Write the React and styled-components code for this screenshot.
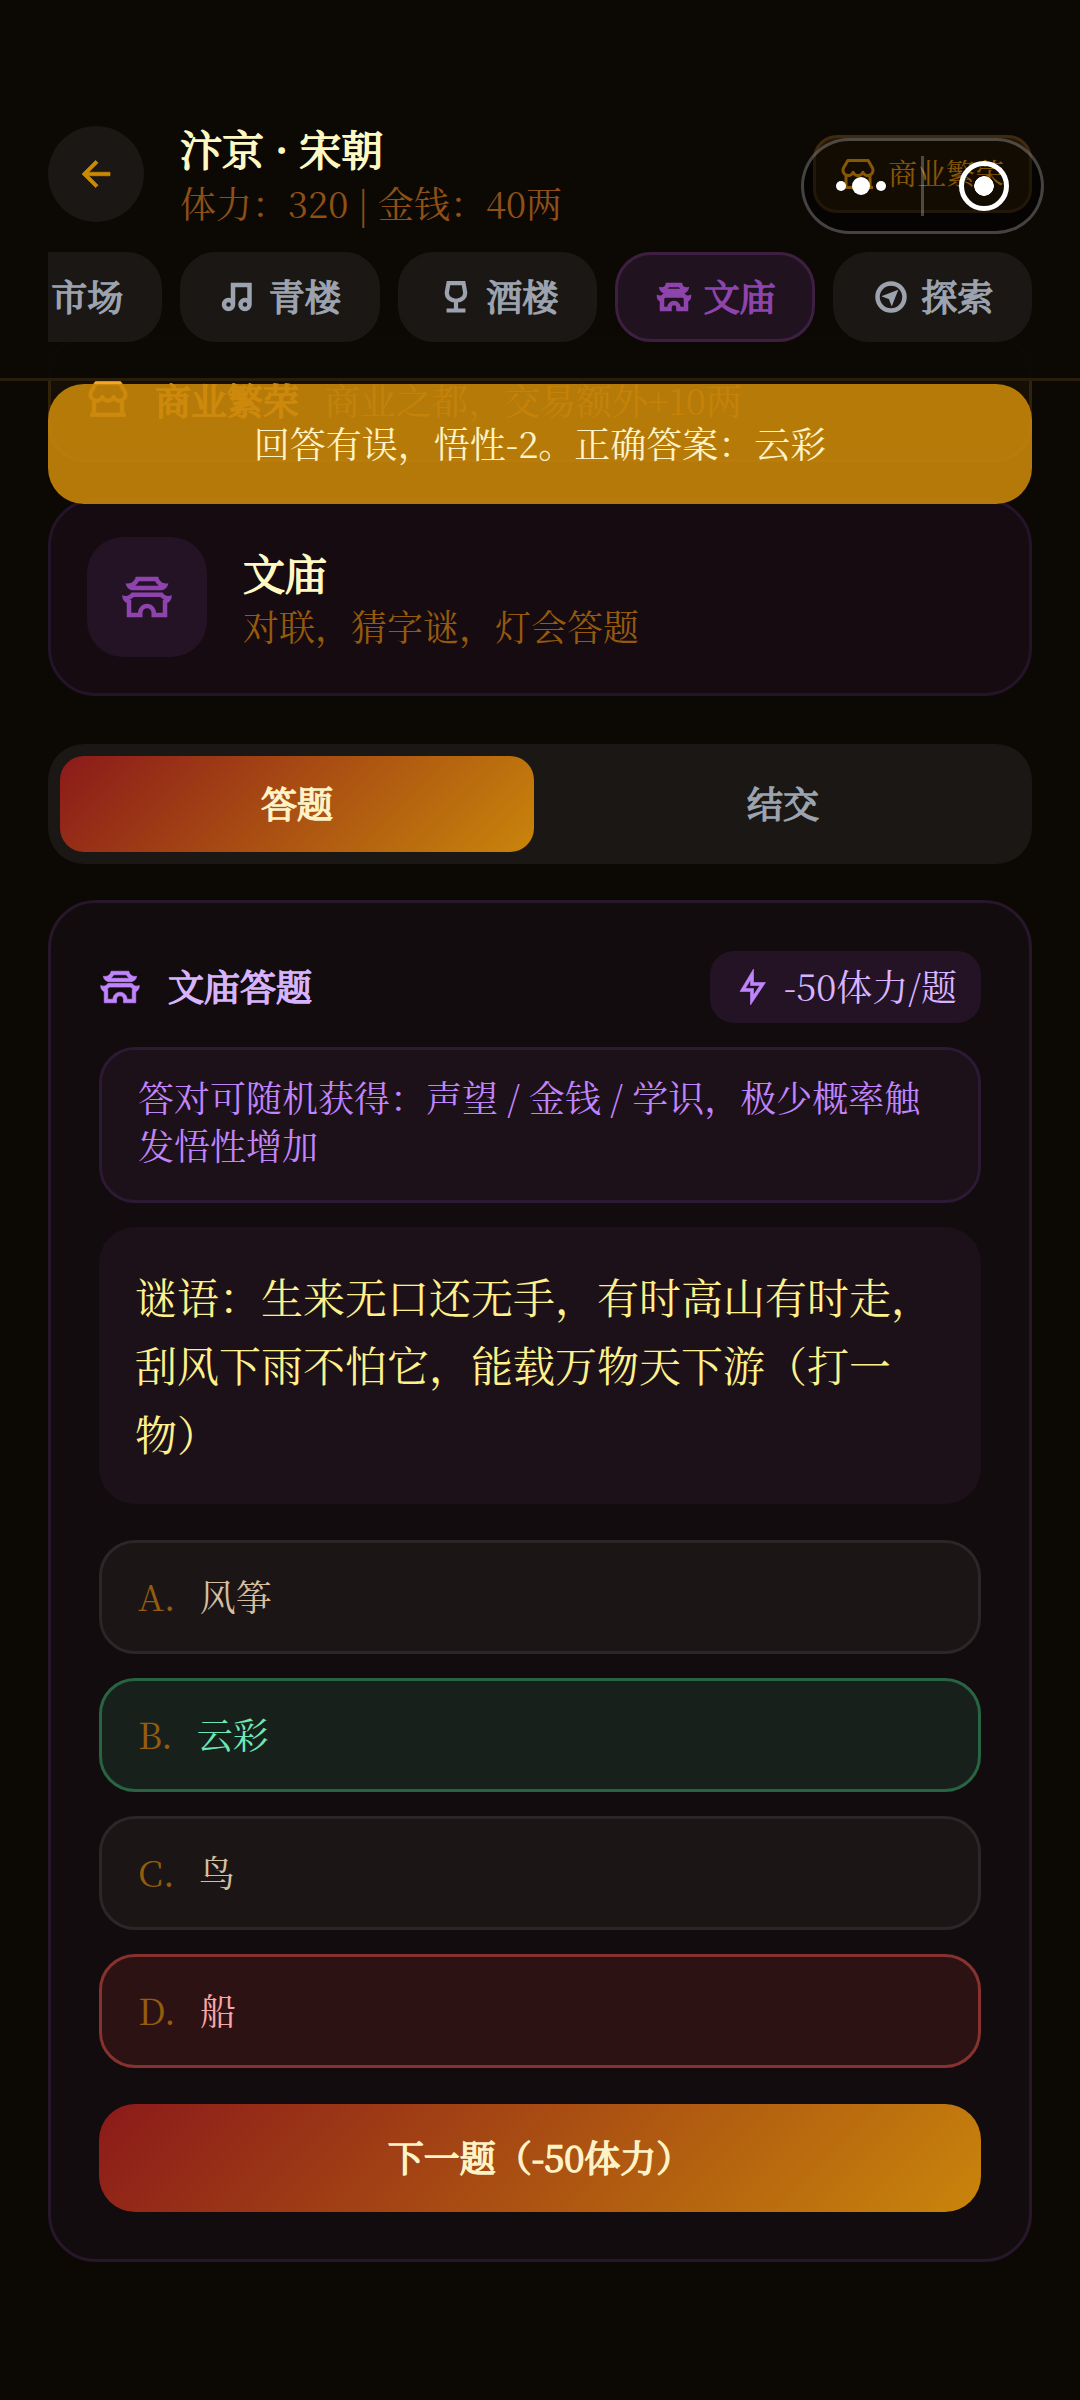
import React from 'react';
import styled, { createGlobalStyle, css } from 'styled-components';
import {
  RiArrowLeftLine,
  RiMusic2Line,
  RiAncientGateLine,
  RiCompassDiscoverLine,
  RiStore2Line,
  RiFlashlightLine,
} from 'react-icons/ri';

const GobletIcon = () => (
  <svg width="1em" height="1em" viewBox="0 0 24 24">
    <path
      d="M7 2.7h10l1.1 6.2c.2 3.3-2.5 5.6-6.1 5.6s-6.3-2.3-6.1-5.6zM12 14.5V21M5.7 21h12.6"
      fill="none"
      stroke="currentColor"
      strokeWidth="2.8"
    />
  </svg>
);

const tabs = [
  { id: 'market', label: '市场', icon: RiStore2Line },
  { id: 'music', label: '青楼', icon: RiMusic2Line },
  { id: 'tavern', label: '酒楼', icon: GobletIcon },
  { id: 'temple', label: '文庙', icon: RiAncientGateLine },
  { id: 'explore', label: '探索', icon: RiCompassDiscoverLine },
];

const options = [
  { key: 'A', text: '风筝', state: 'idle' },
  { key: 'B', text: '云彩', state: 'right' },
  { key: 'C', text: '鸟', state: 'idle' },
  { key: 'D', text: '船', state: 'wrong' },
];

const App = () => {
  const activeTab = 'temple';

  return (
    <Page>
      <GlobalStyle />

      <Header>
        <TopRow>
          <BackButton><RiArrowLeftLine /></BackButton>
          <div>
            <CityName>汴京 · 宋朝</CityName>
            <Stats>体力：320 | 金钱：40两</Stats>
          </div>
          <CityTag><RiStore2Line /><Label>商业繁荣</Label></CityTag>
        </TopRow>
        <TabScroller>
          {tabs.map(({ id, label, icon: Icon }) => (
            <Tab key={id} $active={id === activeTab}>
              <Icon />
              <Label>{label}</Label>
            </Tab>
          ))}
        </TabScroller>
      </Header>

      <Capsule>
        <Dots><i /><b /><i /></Dots>
        <Divider />
        <Target />
      </Capsule>

      <Toast>回答有误，悟性-2。正确答案：云彩</Toast>

      <Content>
        <Banner>
          <RiStore2Line />
          <strong>商业繁荣</strong>
          <span>商业之都，交易额外+10两</span>
        </Banner>

        <PlaceCard>
          <PlaceIcon><RiAncientGateLine /></PlaceIcon>
          <div>
            <PlaceName>文庙</PlaceName>
            <PlaceDesc>对联，猜字谜，灯会答题</PlaceDesc>
          </div>
        </PlaceCard>

        <Switcher>
          <SwitchItem $active>答题</SwitchItem>
          <SwitchItem>结交</SwitchItem>
        </Switcher>

        <QuizCard>
          <QuizHead>
            <QuizTitle><RiAncientGateLine /><Label>文庙答题</Label></QuizTitle>
            <Cost><RiFlashlightLine /><Label>-50体力/题</Label></Cost>
          </QuizHead>
          <Hint>答对可随机获得：声望 / 金钱 / 学识，极少概率触发悟性增加</Hint>
          <Question>谜语：生来无口还无手，有时高山有时走，刮风下雨不怕它，能载万物天下游（打一物）</Question>
          <Options>
            {options.map(option => (
              <Option key={option.key} $state={option.state}>
                <OptionKey>{option.key}.</OptionKey>
                {option.text}
              </Option>
            ))}
          </Options>
          <NextButton>下一题（-50体力）</NextButton>
        </QuizCard>
      </Content>
    </Page>
  );
};

// Styles
const GlobalStyle = createGlobalStyle`
  * {
    box-sizing: border-box;
  }

  body {
    margin: 0;
    background: #0c0905;
    font-family: 'Noto Serif CJK SC', 'Noto Serif SC', 'Source Han Serif SC', 'Liberation Serif', 'Noto Sans CJK SC', serif;
  }

  svg {
    flex-shrink: 0;
  }
`;

// regular glyphs thickened by an outline, lighter than the real bold cut
const heavy = css`
  font-weight: 400;
  -webkit-text-stroke: 1.5px currentColor;
`;

const Page = styled.div`
  position: relative;
  height: 2400px;
  overflow: hidden;
  background: #0c0905;
  color: #fef3c7;
`;

const Label = styled.span`
  padding-bottom: 3px;
`;

const Header = styled.header`
  position: absolute;
  top: 0;
  left: 0;
  right: 0;
  z-index: 2;
  height: 381px;
  padding: 126px 48px 0;
  background: rgba(12, 9, 5, 0.98);
  border-bottom: 3px solid #291d0c;
`;

const TopRow = styled.div`
  display: flex;
  height: 96px;
  gap: 36px;
`;

const BackButton = styled.div`
  display: flex;
  align-items: center;
  justify-content: center;
  width: 96px;
  height: 96px;
  border-radius: 50%;
  background: #1a1714;
  color: #ca8a04;
  font-size: 42px;

  svg {
    stroke: currentColor;
    stroke-width: 0.4;
  }
`;

const CityName = styled.div`
  ${heavy}
  font-size: 42px;
  line-height: 44px;
  color: #fef9c3;
  white-space: pre;
`;

const Stats = styled.div`
  margin-top: 6px;
  font-size: 36px;
  line-height: 54px;
  color: #8f5016;
  white-space: pre;
`;

const CityTag = styled.div`
  display: flex;
  align-items: center;
  gap: 12px;
  height: 78px;
  margin: 9px 0 0 auto;
  padding: 0 25px 0 24px;
  border: 3px solid #402a10;
  border-radius: 24px;
  background: #241706;
  color: #f59e0b;
  font-size: 29px;

  svg {
    font-size: 36px;
  }
`;

const TabScroller = styled.div`
  display: flex;
  justify-content: flex-end;
  gap: 18px;
  margin-top: 30px;
  overflow: hidden;
`;

const Tab = styled.div`
  ${heavy}
  display: flex;
  flex-shrink: 0;
  align-items: center;
  justify-content: center;
  gap: 12px;
  width: 199.5px;
  height: 90px;
  padding-left: 2px;
  border-radius: 36px;
  border: 3px solid ${props => props.$active ? '#3d1f42' : '#1a1714'};
  background: ${props => props.$active ? '#21121f' : '#1a1714'};
  color: ${props => props.$active ? '#8e44ad' : '#9ca3af'};
  font-size: 36px;

  svg {
    stroke: currentColor;
    stroke-width: 1;
  }
`;

const Capsule = styled.div`
  position: absolute;
  top: 138px;
  left: 801px;
  z-index: 3;
  display: flex;
  align-items: center;
  width: 243px;
  height: 96px;
  padding: 0 32px;
  border: 3px solid rgba(255, 255, 255, 0.25);
  border-radius: 48px;
  background: rgba(0, 0, 0, 0.45);
`;

const Dots = styled.div`
  display: flex;
  align-items: center;
  gap: 6px;

  i, b {
    width: 10px;
    height: 10px;
    border-radius: 50%;
    background: #fff;
  }

  b {
    width: 18px;
    height: 18px;
  }
`;

const Divider = styled.div`
  width: 3px;
  height: 60px;
  margin-left: 35px;
  background: rgba(255, 255, 255, 0.25);
`;

const Target = styled.div`
  width: 50px;
  height: 50px;
  margin-left: 35px;
  border: 5px solid #fff;
  border-radius: 50%;
  background: radial-gradient(circle, #fff 9.5px, transparent 10px);
`;

const Toast = styled.div`
  position: absolute;
  top: 384px;
  left: 48px;
  right: 48px;
  z-index: 3;
  display: flex;
  align-items: center;
  justify-content: center;
  height: 120px;
  padding-bottom: 3px;
  border-radius: 36px;
  background: rgba(200, 134, 10, 0.9);
  font-size: 36px;
`;

const Content = styled.main`
  padding: 336px 48px 0;
`;

const Banner = styled.div`
  display: flex;
  align-items: center;
  height: 126px;
  padding: 0 36px;
  border: 3px solid #33220a;
  border-radius: 36px;
  background: #160f05;
  color: #f5a623;
  font-size: 36px;

  svg {
    font-size: 42px;
    margin-right: 26px;
    stroke: currentColor;
    stroke-width: 0.4;
  }

  strong {
    ${heavy}
    margin-right: 25px;
  }

  span {
    color: #a16207;
  }
`;

const PlaceCard = styled.div`
  display: flex;
  align-items: center;
  gap: 36px;
  height: 198px;
  margin-top: 36px;
  padding: 0 36px;
  border: 3px solid #24142a;
  border-radius: 48px;
  background: #150b10;
`;

const PlaceIcon = styled.div`
  display: flex;
  align-items: center;
  justify-content: center;
  width: 120px;
  height: 120px;
  border-radius: 36px;
  background: #241325;
  color: #8e44ad;
  font-size: 54px;
`;

const PlaceName = styled.div`
  ${heavy}
  margin-top: 4px;
  font-size: 42px;
  line-height: 52px;
  color: #fef9c3;
`;

const PlaceDesc = styled.div`
  margin-top: 1px;
  font-size: 36px;
  line-height: 54px;
  color: #955a0c;
`;

const Switcher = styled.div`
  display: flex;
  height: 120px;
  margin-top: 48px;
  padding: 12px;
  border-radius: 36px;
  background: #1a1714;
`;

const SwitchItem = styled.div`
  ${heavy}
  display: flex;
  flex: 1;
  align-items: center;
  justify-content: center;
  margin-right: ${props => props.$active ? '12px' : '0'};
  padding-bottom: 3px;
  border-radius: 24px;
  background: ${props => props.$active ? 'linear-gradient(135deg, #8b1a1a, #c9850b)' : 'none'};
  color: ${props => props.$active ? '#fef3c7' : '#9ca3af'};
  font-size: 36px;
`;

const QuizCard = styled.section`
  height: 1362px;
  margin-top: 36px;
  padding: 48px;
  border: 3px solid #28162b;
  border-radius: 48px;
  background: #130c0e;
`;

const QuizHead = styled.div`
  display: flex;
  align-items: center;
  justify-content: space-between;
`;

const QuizTitle = styled.div`
  ${heavy}
  display: flex;
  align-items: center;
  gap: 27px;
  color: #d8b4fe;
  font-size: 36px;

  svg {
    color: #c084fc;
    font-size: 42px;
    stroke: currentColor;
    stroke-width: 0.4;
  }
`;

const Cost = styled.div`
  display: flex;
  align-items: center;
  gap: 14px;
  height: 72px;
  padding: 0 24px;
  border-radius: 24px;
  background: #241325;
  color: #d8b4fe;
  font-size: 36px;

  svg {
    color: #c084fc;
    stroke: currentColor;
    stroke-width: 0.4;
  }
`;

const Hint = styled.div`
  height: 156px;
  margin-top: 24px;
  padding: 23px 36px;
  border: 3px solid #2c1933;
  border-radius: 36px;
  background: #1c1019;
  color: #c084fc;
  font-size: 36px;
  line-height: 48px;
`;

const Question = styled.div`
  height: 277px;
  margin-top: 24px;
  padding: 35px 36px;
  border-radius: 36px;
  background: #1c1019;
  color: #fef08a;
  font-size: 42px;
  line-height: 68.25px;
`;

const Options = styled.div`
  display: flex;
  flex-direction: column;
  gap: 24px;
  margin-top: 36px;
`;

const optionColors = {
  idle: { border: '#2b2628', background: '#1b1516', text: '#d6bfa0' },
  right: { border: '#286442', background: '#18201b', text: '#6ee7b7' },
  wrong: { border: '#87322f', background: '#2d1214', text: '#fca5a5' },
};

const Option = styled.div`
  display: flex;
  align-items: center;
  height: 114px;
  padding: 0 36px 4px;
  border: 3px solid ${props => optionColors[props.$state].border};
  border-radius: 36px;
  background: ${props => optionColors[props.$state].background};
  color: ${props => optionColors[props.$state].text};
  font-size: 36px;
`;

const OptionKey = styled.span`
  margin-right: 24px;
  color: #945c0d;
`;

const NextButton = styled.div`
  ${heavy}
  display: flex;
  align-items: center;
  justify-content: center;
  height: 108px;
  margin-top: 36px;
  padding-bottom: 3px;
  border-radius: 36px;
  background: linear-gradient(135deg, #8b1a1a, #c9850b);
  font-size: 36px;
`;

export default App;
